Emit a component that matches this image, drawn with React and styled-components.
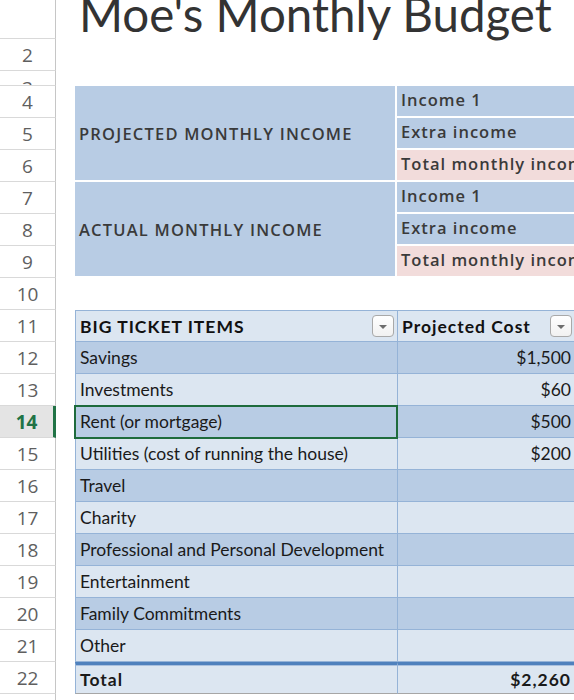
import React from "react";
import styled, { createGlobalStyle, css } from "styled-components";

const GlobalStyle = createGlobalStyle`
  html, body {
    margin: 0;
    padding: 0;
    background: #ffffff;
    overflow: hidden;
  }
`;

const income = [
  { label: "PROJECTED MONTHLY INCOME", start: 4 },
  { label: "ACTUAL MONTHLY INCOME", start: 7 },
];

const items = [
  { name: "Savings", cost: "$1,500" },
  { name: "Investments", cost: "$60" },
  { name: "Rent (or mortgage)", cost: "$500", selected: true },
  { name: "Utilities (cost of running the house)", cost: "$200" },
  { name: "Travel", cost: "" },
  { name: "Charity", cost: "" },
  { name: "Professional and Personal Development", cost: "" },
  { name: "Entertainment", cost: "" },
  { name: "Family Commitments", cost: "" },
  { name: "Other", cost: "" },
];

const rowNumbers = [1, 2, 3, 4, 5, 6, 7, 8, 9, 10, 11, 12, 13, 14, 15, 16, 17, 18, 19, 20, 21, 22, 23];

export default function App() {
  return (
    <>
      <GlobalStyle />
      <Sheet>
        {rowNumbers.map(n => (
          <RowHead key={n} $row={n} $active={n === 14} $short={n === 3}>
            {n === 1 ? "" : n}
          </RowHead>
        ))}

        <Title>Moe's Monthly Budget</Title>

        {income.map(group => (
          <React.Fragment key={group.label}>
            <IncomeLabel $row={group.start}>{group.label}</IncomeLabel>
            <IncomeCell $row={group.start}>Income 1</IncomeCell>
            <IncomeCell $row={group.start + 1}>Extra income</IncomeCell>
            <IncomeCell $row={group.start + 2} $total>
              Total monthly income
            </IncomeCell>
          </React.Fragment>
        ))}

        <HeadCell $row={11} $col={3}>
          <span>BIG TICKET ITEMS</span>
          <FilterButton />
        </HeadCell>
        <HeadCell $row={11} $col={4}>
          <span>Projected Cost</span>
          <FilterButton />
        </HeadCell>

        {items.map((item, i) => (
          <React.Fragment key={item.name}>
            <BodyCell $row={12 + i} $col={3} $band={i % 2 === 0} $selected={item.selected}>
              {item.name}
            </BodyCell>
            <BodyCell $row={12 + i} $col={4} $band={i % 2 === 0} $money>
              {item.cost}
            </BodyCell>
          </React.Fragment>
        ))}

        <TotalCell $col={3}>Total</TotalCell>
        <TotalCell $col={4} $money>$2,260</TotalCell>
      </Sheet>
    </>
  );
}

const Sheet = styled.div`
  display: grid;
  grid-template-columns: 56px 19px 322px 178px;
  grid-template-rows: 39px 32px 15px repeat(20, 32px);
  font-family: Lato, "Open Sans", sans-serif;
  color: #1a1a1a;
`;

const RowHead = styled.div`
  grid-row: ${p => p.$row};
  grid-column: 1;
  display: flex;
  justify-content: center;
  align-items: ${p => (p.$short ? "flex-start" : "center")};
  overflow: hidden;
  padding-top: ${p => (p.$short ? "4px" : "0")};
  box-sizing: border-box;
  border-bottom: 1px solid #d9d9d9;
  border-right: 1px solid #c6c6c6;
  font-family: "Open Sans", sans-serif;
  font-size: 19px;
  color: #5f5f5f;
  background: #ffffff;

  ${p =>
    p.$active &&
    css`
      background: #e4e4e4;
      color: #217346;
      font-weight: 700;
      border-right: 3px solid #217346;
    `}
`;

const Title = styled.div`
  grid-row: 1;
  grid-column: 3 / span 2;
  align-self: end;
  margin: 0 0 2px 4px;
  font-family: Lato, sans-serif;
  font-weight: 400;
  font-size: 47.5px;
  line-height: 1;
  color: #333333;
  white-space: nowrap;
`;

const incomeText = css`
  font-family: "Open Sans", sans-serif;
  font-weight: 600;
  font-size: 16.5px;
  letter-spacing: 1px;
  color: #3a3a3a;
  box-sizing: border-box;
  border-bottom: 2px solid #ffffff;
  display: flex;
  align-items: center;
  padding-left: 4px;
  white-space: nowrap;
  overflow: hidden;
`;

const IncomeLabel = styled.div`
  ${incomeText}
  grid-row: ${p => p.$row} / span 3;
  grid-column: 3;
  background: #b8cce4;
  border-right: 2px solid #ffffff;
  letter-spacing: 1.2px;
`;

const IncomeCell = styled.div`
  ${incomeText}
  grid-row: ${p => p.$row};
  grid-column: 4;
  padding-bottom: 3px;
  background: ${p => (p.$total ? "#f2dcdb" : "#b8cce4")};
`;

const cellBase = css`
  grid-column: ${p => p.$col};
  display: flex;
  align-items: center;
  box-sizing: border-box;
  padding: 0 4px;
  border-bottom: 1px solid #95b3d7;
  border-left: 1px solid #95b3d7;
  font-size: 17.5px;
  white-space: nowrap;
  overflow: hidden;
  justify-content: ${p => (p.$money ? "flex-end" : "flex-start")};
`;

const HeadCell = styled.div`
  ${cellBase}
  grid-row: ${p => p.$row};
  justify-content: space-between;
  padding-right: 3px;
  background: #dce6f1;
  border-top: 1px solid #95b3d7;
  font-weight: 700;
  letter-spacing: 1px;
  color: #111111;
`;

const BodyCell = styled.div`
  ${cellBase}
  grid-row: ${p => p.$row};
  background: ${p => (p.$band ? "#b8cce4" : "#dce6f1")};

  ${p =>
    p.$selected &&
    css`
      outline: 2px solid #1e6b3c;
      outline-offset: -1px;
      position: relative;
      z-index: 1;
    `}
`;

const TotalCell = styled.div`
  ${cellBase}
  grid-row: 22;
  background: #dce6f1;
  border-top: 3px solid #4f81bd;
  box-shadow: inset 0 1px 0 #a9c0de;
  border-bottom: 1px solid #a6a6a6;
  font-weight: 700;
  letter-spacing: 1px;
`;

const FilterButton = styled.span`
  flex: none;
  width: 22px;
  height: 22px;
  box-sizing: border-box;
  border: 1px solid #a9a9a9;
  border-radius: 4px;
  background: linear-gradient(#ffffff, #f1f1f1);
  display: flex;
  align-items: center;
  justify-content: center;

  &::after {
    content: "";
    border-left: 4px solid transparent;
    border-right: 4px solid transparent;
    border-top: 4px solid #6d6d6d;
    margin-top: 1px;
  }
`;
